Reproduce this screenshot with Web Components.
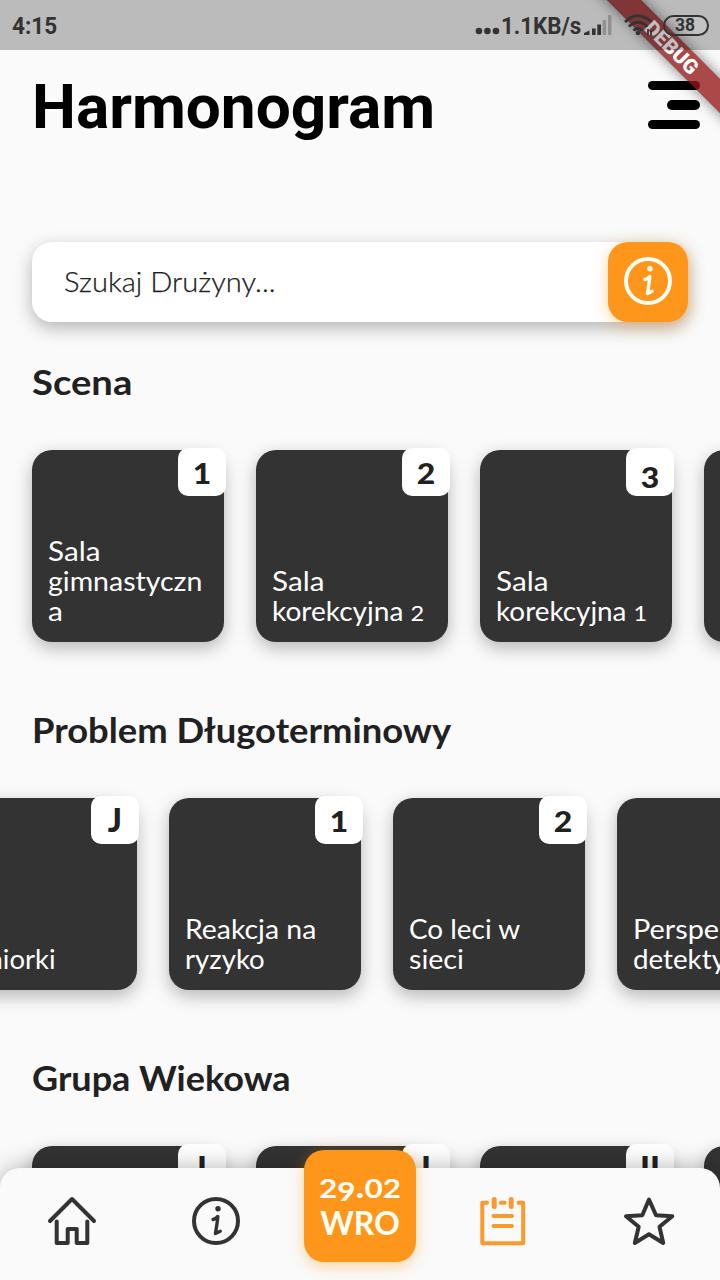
<!DOCTYPE html>
<html lang="pl">
<head>
<meta charset="utf-8">
<title>Harmonogram</title>
<style>
html,body{margin:0;height:100%;overflow:hidden}
body{background:#fafafa;color:#212121;font-family:Lato,"Open Sans",sans-serif}
</style>
</head>
<body>
<schedule-app></schedule-app>
<script>
const define = (name, html, ready) => {
  const t = document.createElement('template');
  t.innerHTML = html;
  customElements.define(name, class extends HTMLElement {
    constructor() {
      super();
      this.attachShadow({mode: 'open'}).append(t.content.cloneNode(true));
    }
    connectedCallback() { if (ready) ready(this, this.shadowRoot); }
  });
};

/* One line of text, widened so that it fills the width "w". */
define('fit-text', `<style>:host{display:block;white-space:nowrap;width:max-content;transform-origin:0 50%}:host([center]){transform-origin:50% 50%}</style><slot></slot>`, el => queueMicrotask(() => {
  const w = +el.getAttribute('w'), now = el.offsetWidth;
  if (w && now) el.style.transform = `scaleX(${(w / now).toFixed(4)})`;
}));

/* Old-style figure: x-height size, optionally hanging below the baseline. */
define('old-num', `<style>:host{display:inline-block;line-height:1;font-size:.84em;font-weight:inherit}
:host([drop]){position:relative;top:.13em}:host([slot]){transform:scaleX(1.15)}</style><slot></slot>`);

define('info-icon', `<style>:host{display:block;width:48px;height:48px}svg{display:block}</style>
<svg width="48" height="48" viewBox="0 0 48 48" fill="none" stroke="currentColor" stroke-width="4" stroke-linecap="round" stroke-linejoin="round"><circle cx="24" cy="24" r="22"/><circle cx="26" cy="11.7" r="2.7" fill="currentColor" stroke="none"/><path d="M21 22.5Q23.5 22 25.8 19.5Q25.6 24 23.4 36.5L28.2 34.3" stroke-width="3.4"/></svg>`);

define('status-bar', `<style>
:host{display:flex;box-sizing:border-box;height:50px;padding:0 12px;align-items:center;background:rgba(0,0,0,.25);color:#333;font:700 24px/50px Roboto,sans-serif;position:relative;z-index:2}
.time{flex:1;padding-top:2px}.rate{padding-top:2px;width:79px}
svg{display:block}.dots{margin:11px 1px 0 0}.signal{margin:0 12px 0 4px}.wifi{margin-right:10px}
.battery{box-sizing:border-box;width:46px;height:21px;border:2px solid #333;border-radius:11px;font-size:17.5px;line-height:17px;text-align:center;margin-right:-1px;padding-right:2px;background:linear-gradient(90deg,#0000 68%,rgba(255,255,255,.12) 68%)}
</style>
<div class="time"><fit-text w="45">4:15</fit-text></div>
<svg class="dots" width="25" height="8" fill="#333"><circle cx="3.9" cy="4" r="3.3"/><circle cx="12.4" cy="4" r="3.3"/><circle cx="21" cy="4" r="3.3"/></svg>
<div class="rate"><fit-text w="80">1.1KB/s</fit-text></div>
<svg class="signal" width="28" height="20" fill="#333"><path d="M0 20v-2l5.5-2.5V20zM8 13.5h3.6V20H8zM13.3 9.5H17V20h-3.7z"/><path d="M18.6 5h3.5v15h-3.5zM24 0h3.5v20H24z" fill="#919191"/></svg>
<svg class="wifi" width="29" height="22" viewBox="0 0 29 22" fill="none" stroke="#333" stroke-width="3"><path d="M1 8Q14-4.5 27.5 8M5 12.5Q14 4 23.5 12.5M9.5 16.5Q14 12.5 18.5 16.5"/><circle cx="14" cy="19" r="2.3" fill="#333" stroke="none"/><path d="M24 15v6M27 16v6" stroke-width="1.8"/></svg>
<div class="battery">38</div>`);

define('debug-banner', `<style>
:host{position:absolute;right:-67px;top:36px;width:230px;height:24px;transform:rotate(45deg);z-index:1;
background:linear-gradient(rgba(183,28,28,.63),rgba(183,28,28,.63)),rgba(0,0,0,.4);box-shadow:0 0 14px rgba(0,0,0,.5);
color:#fff;font:900 20.4px/24px Roboto,sans-serif;display:flex;justify-content:center}
</style><fit-text center w="66">DEBUG</fit-text>`);

define('page-header', `<style>
:host{display:flex;justify-content:space-between;height:192px;padding:0 20px 0 32px;color:#000;font:700 62px/73px Roboto,sans-serif}
h1{font:inherit;margin:20px 0 0}
.menu{display:flex;flex-direction:column;align-items:flex-end;gap:10.2px;padding-top:31px}
i{display:block;width:52.5px;height:9.2px;border-radius:5px;background:#000}i.short{width:33.5px}
</style><h1><slot></slot></h1><div class="menu"><i></i><i class="short"></i><i></i></div>`);

define('search-field', `<style>
:host{display:flex;height:80px;margin:0 32px;border-radius:20px;background:#fff;box-shadow:0 6px 18px rgba(0,0,0,.28);align-items:center;justify-content:space-between}
.ph{font-weight:300;font-size:28px;line-height:34px;padding:0 0 2px 32px;-webkit-text-stroke:.25px #212121}
.btn{width:80px;height:80px;border-radius:20px;background:#ff961c;color:#fffff5;display:grid;place-items:center;box-shadow:0 4px 16px rgba(255,150,28,.4)}
info-icon{margin-bottom:2px}
</style><div class="ph"><slot></slot></div><div class="btn"><info-icon></info-icon></div>`);

define('place-tile', `<style>
:host{display:flex;flex:none;box-sizing:border-box;position:relative;width:192px;height:192px;padding:0 16px 16px;border-radius:20px;background:#333;color:#fff;font-size:26px;line-height:30px;flex-direction:column;justify-content:flex-end;box-shadow:0 6px 18px rgba(0,0,0,.28)}
.badge{position:absolute;top:-2px;right:-2px;width:48px;height:48px;border-radius:10px;background:#fff;color:#212121;font-size:33px;font-weight:900;line-height:46px;text-align:center;box-sizing:border-box}
</style><slot></slot><div class="badge"><slot name="badge"></slot></div>`);

define('tile-row', `<style>
:host{display:block;height:348px}
h2{font-size:34px;line-height:40px;font-weight:700;margin:0 32px}
.row{display:flex;gap:32px;margin:48px 0 0 var(--shift,0px);padding-left:32px}
</style><h2><slot name="title"></slot></h2><div class="row"><slot></slot></div>`);

define('bottom-nav', `<style>
:host{position:absolute;left:0;right:0;bottom:0;z-index:1;box-sizing:border-box;height:112px;padding:0 16px;display:grid;grid-template-columns:112px 176px 112px 176px 112px;align-items:center;justify-items:center;background:#fafafa;border-radius:20px 20px 0 0;color:#333;box-shadow:0 0 24px rgba(0,0,0,.3)}
svg{display:block;overflow:visible}
svg,info-icon{margin-top:-6px}
.date{width:112px;height:112px;box-sizing:border-box;margin-top:-36px;padding-top:17px;border-radius:20px;background:#ff961c;color:#fffff5;font-size:32px;line-height:37px;font-weight:700;display:flex;flex-direction:column;align-items:center;box-shadow:0 4px 16px rgba(255,150,28,.4)}
</style>
<svg width="48" height="48" viewBox="48 1197 48 48" fill="none" stroke="currentColor" stroke-width="4" stroke-linecap="round" stroke-linejoin="round"><path d="M50 1221L72 1199L94 1221M56.7 1221.5V1243H67.7V1229H76.7V1243H87.3V1221.5"/></svg>
<info-icon></info-icon>
<div class="date"><fit-text center w="82"><old-num>2</old-num><old-num drop>9</old-num>.<old-num>0</old-num><old-num>2</old-num></fit-text><fit-text center w="80">WRO</fit-text></div>
<svg width="48" height="48" viewBox="480.5 1197 48 48" fill="none" stroke="#fc992c" stroke-width="4" stroke-linecap="round" stroke-linejoin="round"><path d="M487.5 1202.7H482.8V1243.2H523.7V1202.7H519M501.3 1202.7H505.2M494 1216H512.5M494 1226H512.5"/><path d="M494.7 1199.5V1206.5M511.7 1199.5V1206.5" stroke-width="5"/></svg>
<svg width="48" height="48" viewBox="624 1197 48 48" fill="none" stroke="currentColor" stroke-width="4" stroke-linecap="round" stroke-linejoin="round"><path d="M649 1199.5L656 1215.2L672.3 1216.3L659.5 1226.8L663.2 1243L649 1234.2L634.8 1243L638.7 1226.8L626 1216.3L642.3 1215.2Z"/></svg>`);

define('schedule-app', `<style>
:host{display:block;position:relative;width:720px;height:1280px;overflow:hidden;background:#fafafa}
main{display:block}
.rows{padding-top:40px}
.second{--shift:-87px}
</style>
<debug-banner></debug-banner>
<status-bar></status-bar>
<main>
<page-header><fit-text w="403">Harmonogram</fit-text></page-header>
<search-field><fit-text w="212">Szukaj Drużyny...</fit-text></search-field>
<div class="rows">
<tile-row><fit-text slot="title" w="100">Scena</fit-text>
<place-tile><fit-text w="52.5">Sala</fit-text><fit-text w="154.5">gimnastyczn</fit-text><fit-text w="15">a</fit-text><old-num slot="badge">1</old-num></place-tile>
<place-tile><fit-text w="52.5">Sala</fit-text><fit-text w="152">korekcyjna <old-num>2</old-num></fit-text><old-num slot="badge">2</old-num></place-tile>
<place-tile><fit-text w="52.5">Sala</fit-text><fit-text w="151">korekcyjna <old-num>1</old-num></fit-text><old-num slot="badge" drop>3</old-num></place-tile>
<place-tile></place-tile></tile-row>
<tile-row class="second"><fit-text slot="title" w="419">Problem Długoterminowy</fit-text>
<place-tile><fit-text w="95">Juniorki</fit-text><span slot="badge">J</span></place-tile>
<place-tile><fit-text w="131">Reakcja na</fit-text><fit-text w="79.5">ryzyko</fit-text><old-num slot="badge">1</old-num></place-tile>
<place-tile><fit-text w="111.5">Co leci w</fit-text><fit-text w="55">sieci</fit-text><old-num slot="badge">2</old-num></place-tile>
<place-tile><fit-text w="163">Perspektywa</fit-text><fit-text w="128">detektywa</fit-text></place-tile></tile-row>
<tile-row><fit-text slot="title" w="258.5">Grupa Wiekowa</fit-text>
<place-tile><span slot="badge">I</span></place-tile>
<place-tile><span slot="badge">I</span></place-tile>
<place-tile><span slot="badge">II</span></place-tile>
<place-tile></place-tile></tile-row>
</div>
</main>
<bottom-nav></bottom-nav>`);
</script>
</body>
</html>
